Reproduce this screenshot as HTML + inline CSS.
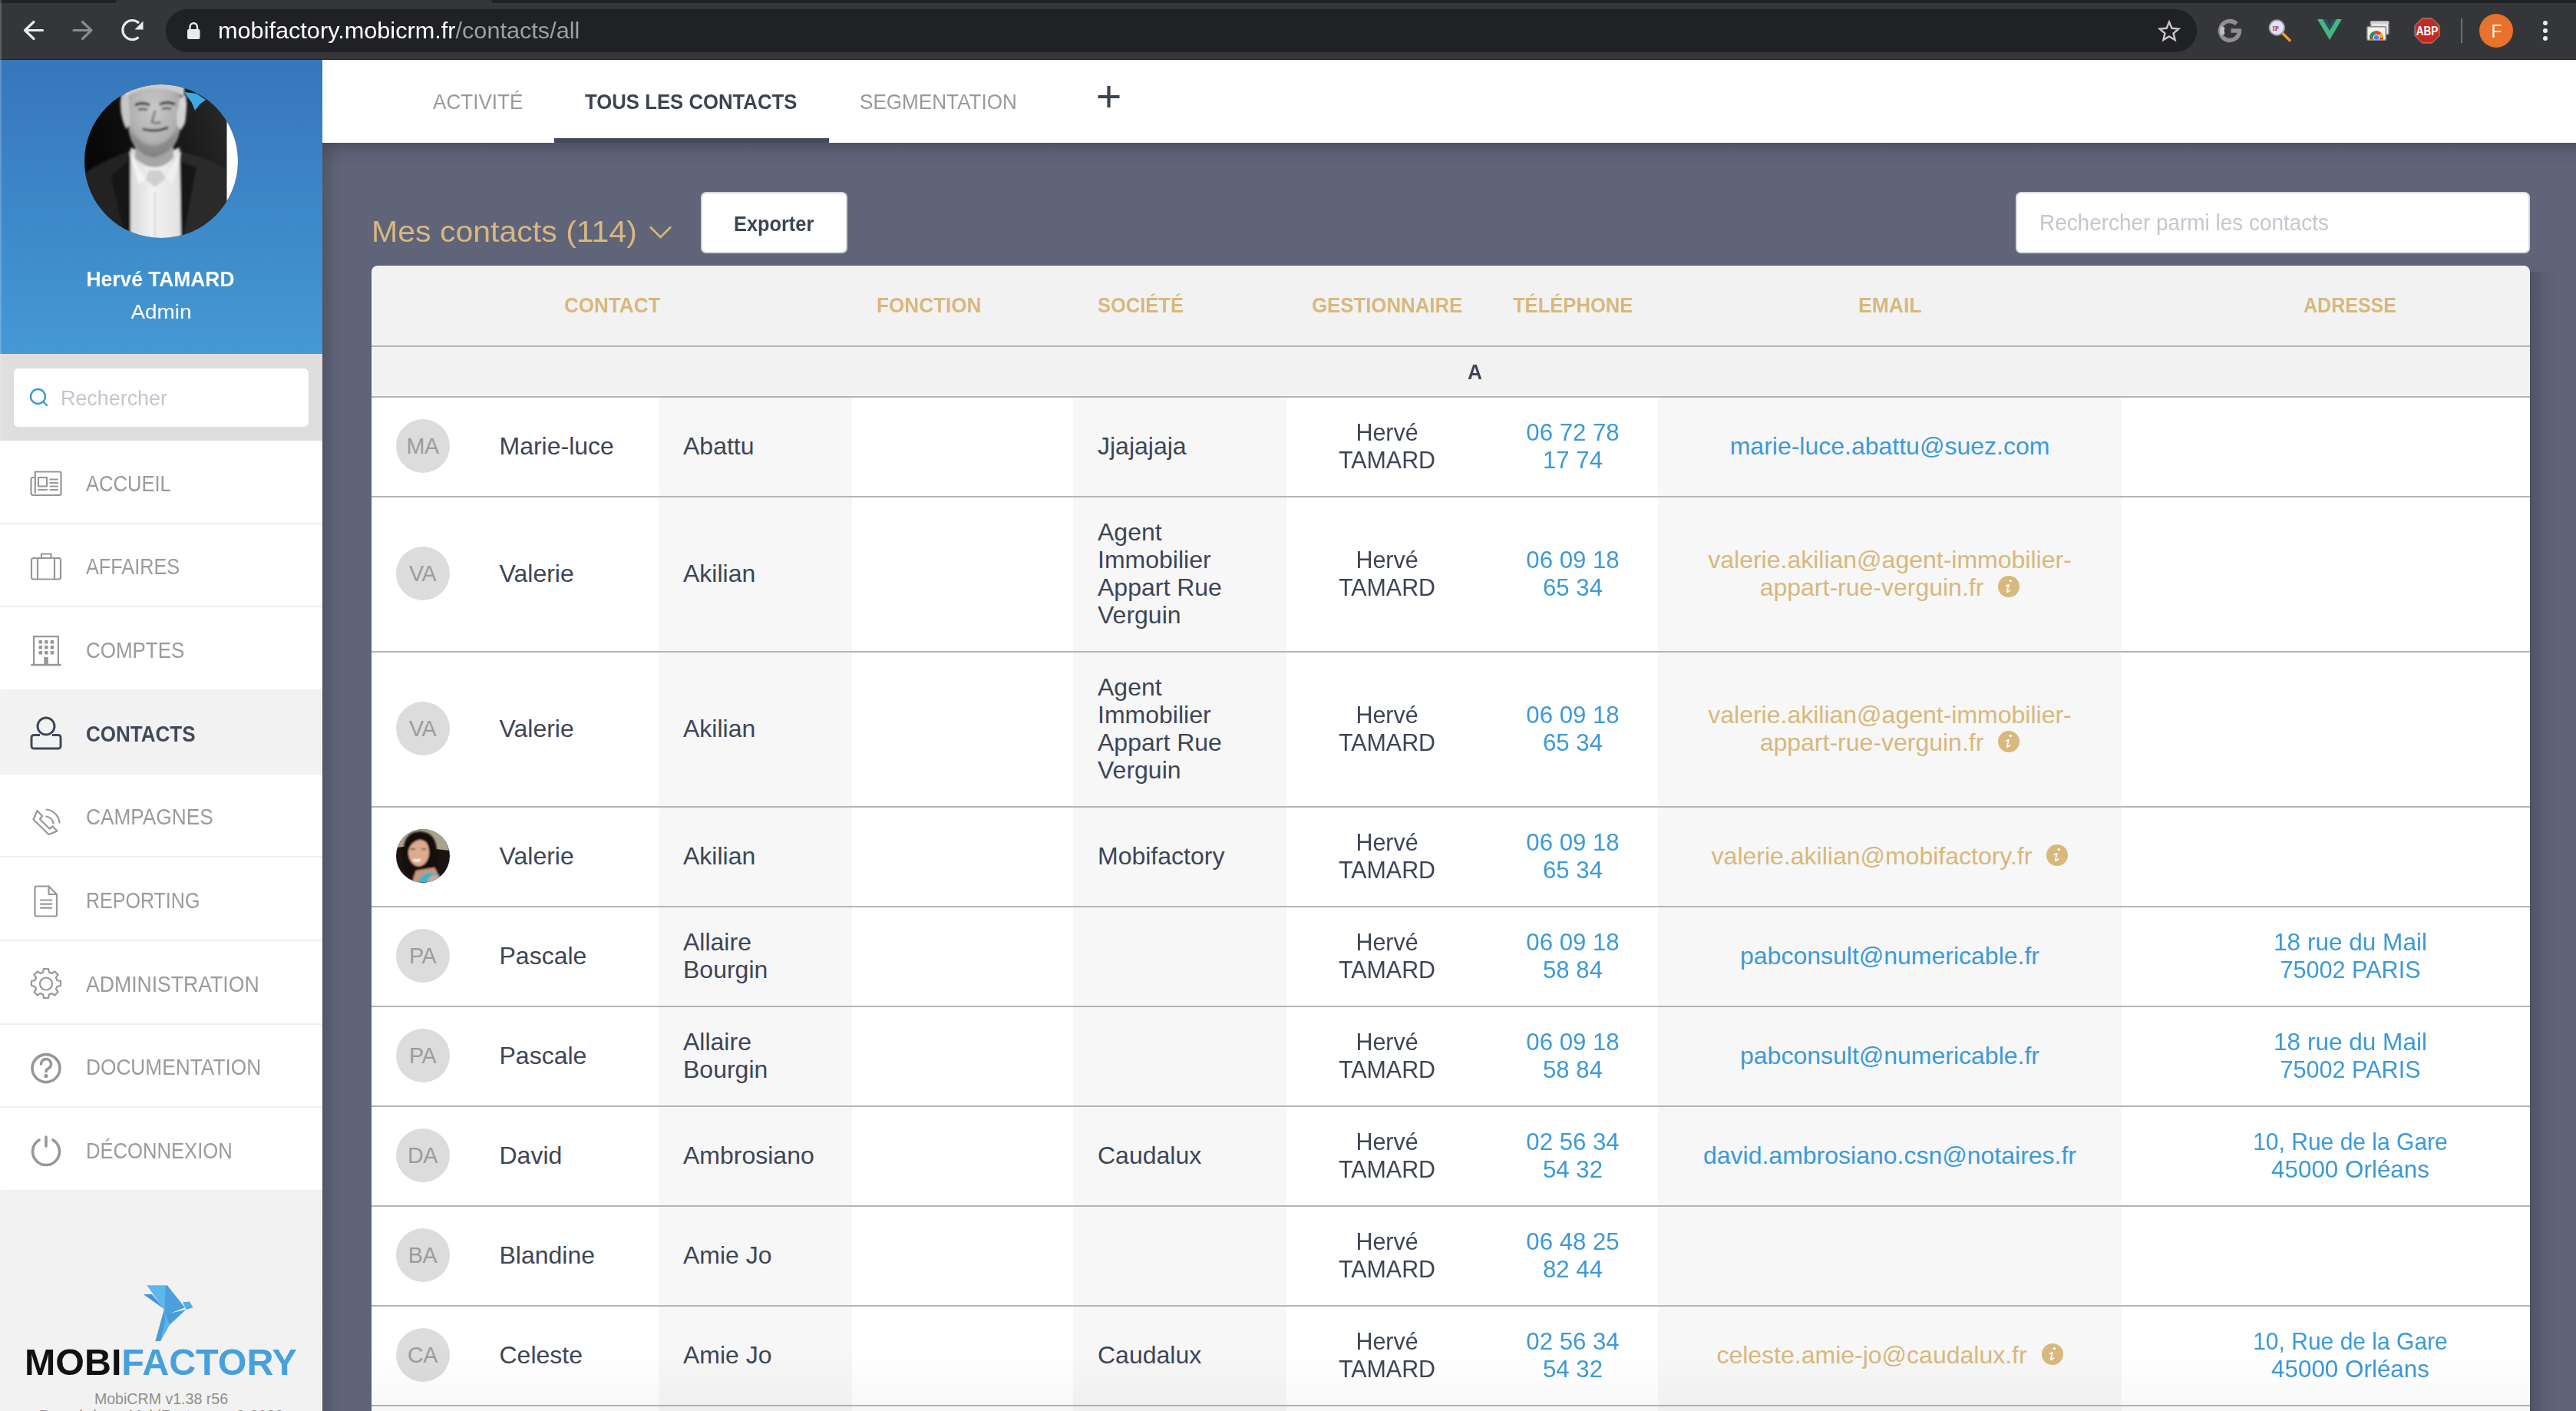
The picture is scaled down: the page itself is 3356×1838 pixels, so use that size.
<!DOCTYPE html><html><head><meta charset="utf-8"><style>
*{margin:0;padding:0;box-sizing:border-box}
html,body{width:3356px;height:1838px;overflow:hidden}
body{position:relative;background:#5f6478;font-family:"Liberation Sans",sans-serif}
.a{position:absolute}
.t{position:absolute;white-space:nowrap}
svg{position:absolute;overflow:visible}
</style></head><body>

<div class="a" style="left:0;top:0;width:3356px;height:78px;background:#35363a"></div>
<div class="a" style="left:0;top:0;width:152px;height:4px;background:#202124;border-bottom-right-radius:4px"></div>
<div class="a" style="left:640px;top:0;width:2716px;height:4px;background:#202124;border-bottom-left-radius:4px"></div>
<div class="a" style="left:0;top:77px;width:3356px;height:1px;background:#222326"></div>
<svg style="left:0;top:0" width="300" height="78"><g fill="none" stroke-linecap="round" stroke-linejoin="round" stroke-width="3.2"><path d="M55.5 39.5H33M44 28.5L32.5 39.5L44 50.5" stroke="#e8eaed"/><path d="M96 39.5H118.5M107.5 28.5L119 39.5L107.5 50.5" stroke="#8a8b8e"/></g><path d="M180.5 48.5 A12.5 12.5 0 1 1 181 30" fill="none" stroke="#e8eaed" stroke-width="3.2"/><path d="M175.5 38.5H186.5V27.5Z" fill="#e8eaed"/></svg>
<div class="a" style="left:216px;top:12px;width:2646px;height:56px;background:#202124;border-radius:28px"></div>
<svg style="left:0;top:0" width="300" height="78"><rect x="244" y="38" width="16.5" height="13" rx="2" fill="#e8eaed"/><path d="M247.5 38.5V35a4.75 4.75 0 0 1 9.5 0v3.5" fill="none" stroke="#e8eaed" stroke-width="2.4"/></svg>
<div class="t" style="top:25.28px;font-size:30.0px;line-height:30.0px;color:#fff;font-weight:400;left:284px;transform:scaleX(1.0220);transform-origin:left top;"><span style="color:#fff">mobifactory.mobicrm.fr</span><span style="color:#9aa0a6">/contacts/all</span></div>
<svg style="left:2800px;top:20px" width="50" height="40"><path transform="translate(26 20.5) scale(0.88) translate(-26 -20.5)" d="M26 7l3.9 9.3 10.1 0.9-7.7 6.6 2.3 9.8L26 28.4l-8.6 5.2 2.3-9.8-7.7-6.6 10.1-0.9z" fill="none" stroke="#c6c6c6" stroke-width="2.8" stroke-linejoin="miter"/></svg>
<svg style="left:2880px;top:15px" width="476" height="50"><path d="M37.5 25a12.5 12.5 0 1 1-3.8-9" fill="none" stroke="#8f8f8f" stroke-width="5.4"/><path d="M26.5 25h13.6" stroke="#8f8f8f" stroke-width="5.4"/><path d="M16 20a12.5 12.5 0 0 0 0 10" fill="none" stroke="#c2c2c2" stroke-width="5.4"/><circle cx="86.3" cy="21" r="9.8" fill="#d6e8fb" stroke="#9a9a9a" stroke-width="1.8"/><text x="80.5" y="24.5" font-size="8.5" font-weight="700" fill="#c22" font-family="Liberation Serif">IP</text><path d="M94.5 29l8.5 8.5" stroke="#f09a30" stroke-width="3.6" stroke-linecap="round"/><path d="M139 10h8l8 14 8-14h8l-16 27z" fill="#41b883"/><path d="M146 10h5l4 7 4-7h5l-9 15z" fill="#35495e"/><defs><clipPath id="cwin"><rect x="204" y="22" width="23.5" height="14.5"/></clipPath></defs><rect x="208.5" y="12.8" width="23.5" height="17" rx="1.5" fill="#e6e6e6" stroke="#8a8a8a" stroke-width="1.6"/><rect x="208.5" y="12.8" width="23.5" height="3" fill="#cfcfcf"/><rect x="203.8" y="19.8" width="24.5" height="17.5" rx="1.5" fill="#f0f0f0" stroke="#8a8a8a" stroke-width="1.6"/><g clip-path="url(#cwin)"><circle cx="216" cy="34" r="9" fill="#db4437"/><path d="M216 34L207 34A9 9 0 0 1 211.5 26.2Z" fill="#0f9d58"/><path d="M216 34L225 34A9 9 0 0 0 222 27.5Z" fill="#f4b400"/><circle cx="216" cy="34" r="4.2" fill="#fff"/><circle cx="216" cy="34" r="3.2" fill="#4285f4"/></g><path d="M275.5 9h13l9.5 9.5v13l-9.5 9.5h-13l-9.5-9.5v-13z" fill="#c42a20" stroke="#e0e0e0" stroke-width="0.6"/><text x="282" y="31.5" text-anchor="middle" font-size="16" font-weight="700" fill="#fff" font-family="Liberation Sans" transform="translate(282 0) scale(0.85 1) translate(-282 0)">ABP</text><rect x="326" y="9" width="2" height="32" fill="#6f7074"/><circle cx="372" cy="25" r="22" fill="#e8712b"/><text x="372.5" y="33.5" text-anchor="middle" font-size="23" fill="#fff" font-family="Liberation Sans">F</text><circle cx="436" cy="15" r="3" fill="#e8eaed"/><circle cx="436" cy="25" r="3" fill="#e8eaed"/><circle cx="436" cy="35" r="3" fill="#e8eaed"/></svg>
<div class="a" style="left:0;top:78px;width:420px;height:1760px;background:#f2f2f2"></div>
<div class="a" style="left:0;top:78px;width:420px;height:383px;background:linear-gradient(#3676bb,#4499d4)"></div>
<svg style="left:110px;top:110px" width="200" height="200" viewBox="0 0 200 200">
<defs><clipPath id="cav"><circle cx="100" cy="100" r="100"/></clipPath>
<filter id="bl" x="-20%" y="-20%" width="140%" height="140%"><feGaussianBlur stdDeviation="1.6"/></filter>
<filter id="bl4" x="-50%" y="-50%" width="200%" height="200%"><feGaussianBlur stdDeviation="4"/></filter>
<linearGradient id="bgm" x1="0" y1="0.3" x2="1" y2="0"><stop offset="0" stop-color="#070707"/><stop offset="0.5" stop-color="#161616"/><stop offset="1" stop-color="#2e2e2e"/></linearGradient>
<radialGradient id="face" cx="0.5" cy="0.38" r="0.62"><stop offset="0" stop-color="#c9c9c9"/><stop offset="0.65" stop-color="#b2b2b2"/><stop offset="1" stop-color="#8a8a8a"/></radialGradient>
<linearGradient id="shirt" x1="0" y1="0" x2="1" y2="0"><stop offset="0" stop-color="#d8d8d8"/><stop offset="0.45" stop-color="#f2f2f2"/><stop offset="1" stop-color="#e0e0e0"/></linearGradient>
</defs>
<g clip-path="url(#cav)">
<rect width="200" height="200" fill="url(#bgm)"/>
<g filter="url(#bl)">
<path d="M-5 120 Q20 100 62 86 L64 205 L-5 205Z" fill="#242424"/>
<path d="M118 86 Q160 94 192 116 L192 205 L118 205Z" fill="#2a2a2a"/>
<path d="M34 118 L62 96 L64 205 L54 205Z" fill="#161616"/>
<path d="M146 108 L120 98 L118 205 L128 205Z" fill="#191919"/>
<path d="M60 82 Q92 98 124 82 L126 205 L60 205Z" fill="url(#shirt)"/>
<path d="M66 74 Q92 100 116 74 L116 96 Q92 120 66 96Z" fill="#a6a6a6"/>
<path d="M58 86 L80 124 L70 130Z" fill="#f4f4f4"/>
<path d="M126 86 L106 122 L116 128Z" fill="#f0f0f0"/>
<path d="M80 124 L92 134 L106 122 L100 112 L84 112Z" fill="#cfcfcf"/>
<path d="M92 140 L92 205" stroke="#c8c8c8" stroke-width="1.5"/>
<path d="M54 18 Q54 -4 90 -6 Q126 -4 126 20 L124 62 Q118 90 90 95 Q64 92 58 62Z" fill="url(#face)"/>
<path d="M50 -8 L130 -8 L130 18 Q122 6 90 5 Q58 6 52 24Z" fill="#cdcdcd"/>
<path d="M48 12 Q44 36 54 58 L60 52 L58 18Z" fill="#c6c6c6"/>
<path d="M132 14 Q136 38 126 60 L120 52 L124 18Z" fill="#d6d6d6"/>
<ellipse cx="126" cy="42" rx="6" ry="14" fill="#d2d2d2"/>
<path d="M66 27 Q75 22 85 27" stroke="#333" stroke-width="3.6" fill="none"/>
<path d="M98 26 Q108 21 118 26" stroke="#333" stroke-width="3.6" fill="none"/>
<path d="M70 33 Q76 31 82 33" stroke="#444" stroke-width="2.4" fill="none"/>
<path d="M101 32 Q107 30 113 32" stroke="#444" stroke-width="2.4" fill="none"/>
<path d="M92 34 L88 49 Q93 52 99 49" stroke="#6a6a6a" stroke-width="2.6" fill="none"/>
<path d="M76 58 Q92 63 109 56" stroke="#383838" stroke-width="3.4" fill="none"/>
<path d="M60 60 Q90 100 122 58 Q116 88 90 95 Q66 90 60 60Z" fill="#737373" opacity="0.45"/>
</g>
<rect x="185.5" y="35" width="20" height="130" fill="#fff"/>
<path d="M130 10 L146 12 L158 20 L150 26 L144 34 L140 24Z" fill="#3fa9e6"/>
</g></svg>
<div class="t" style="top:350.46px;font-size:27.09px;line-height:27.09px;color:#fff;font-weight:700;left:9.499381706191912px;width:400px;text-align:center;transform:scaleX(0.9736);transform-origin:center top;">Hervé TAMARD</div>
<div class="t" style="top:392.92px;font-size:26.68px;line-height:26.68px;color:#fff;font-weight:400;left:10.09302469135801px;width:400px;text-align:center;transform:scaleX(1.0459);transform-origin:center top;">Admin</div>
<div class="a" style="left:0;top:461px;width:420px;height:113px;background:#dedede"></div>
<div class="a" style="left:18px;top:480px;width:384px;height:76px;background:#fff;border-radius:6px"></div>
<svg style="left:0;top:0" width="100" height="600"><circle cx="49.5" cy="516.5" r="9.5" fill="none" stroke="#3b9ad9" stroke-width="2.4"/><path d="M56.5 523.5L61 528" stroke="#3b9ad9" stroke-width="2.4" stroke-linecap="round"/></svg>
<div class="t" style="top:504.32px;font-size:28.21px;line-height:28.21px;color:#c3c6ce;font-weight:400;left:79.0px;transform:scaleX(0.9532);transform-origin:left top;">Rechercher</div>
<div class="a" style="left:0;top:574.00px;width:420px;height:108.67px;background:#fff"></div>
<div class="a" style="left:0;top:680.67px;width:420px;height:2px;background:#efefef"></div>
<div class="t" style="top:615.66px;font-size:28.63px;line-height:28.63px;color:#9b9b9b;font-weight:400;left:112.1px;transform:scaleX(0.8927);transform-origin:left top;">ACCUEIL</div>
<div class="a" style="left:0;top:682.67px;width:420px;height:108.67px;background:#fff"></div>
<div class="a" style="left:0;top:789.34px;width:420px;height:2px;background:#efefef"></div>
<div class="t" style="top:724.33px;font-size:28.63px;line-height:28.63px;color:#9b9b9b;font-weight:400;left:112.1px;transform:scaleX(0.8820);transform-origin:left top;">AFFAIRES</div>
<div class="a" style="left:0;top:791.34px;width:420px;height:108.67px;background:#fff"></div>
<div class="t" style="top:833.00px;font-size:28.63px;line-height:28.63px;color:#9b9b9b;font-weight:400;left:112.1px;transform:scaleX(0.9062);transform-origin:left top;">COMPTES</div>
<div class="a" style="left:0;top:897.7px;width:420px;height:111.6px;background:#f2f2f2"></div>
<div class="t" style="top:941.67px;font-size:28.63px;line-height:28.63px;color:#414959;font-weight:700;left:112.1px;transform:scaleX(0.9087);transform-origin:left top;">CONTACTS</div>
<div class="a" style="left:0;top:1008.68px;width:420px;height:108.67px;background:#fff"></div>
<div class="a" style="left:0;top:1115.35px;width:420px;height:2px;background:#efefef"></div>
<div class="t" style="top:1050.34px;font-size:28.63px;line-height:28.63px;color:#9b9b9b;font-weight:400;left:112.1px;transform:scaleX(0.9163);transform-origin:left top;">CAMPAGNES</div>
<div class="a" style="left:0;top:1117.35px;width:420px;height:108.67px;background:#fff"></div>
<div class="a" style="left:0;top:1224.02px;width:420px;height:2px;background:#efefef"></div>
<div class="t" style="top:1159.01px;font-size:28.63px;line-height:28.63px;color:#9b9b9b;font-weight:400;left:112.1px;transform:scaleX(0.8745);transform-origin:left top;">REPORTING</div>
<div class="a" style="left:0;top:1226.02px;width:420px;height:108.67px;background:#fff"></div>
<div class="a" style="left:0;top:1332.69px;width:420px;height:2px;background:#efefef"></div>
<div class="t" style="top:1267.68px;font-size:28.63px;line-height:28.63px;color:#9b9b9b;font-weight:400;left:112.1px;transform:scaleX(0.9295);transform-origin:left top;">ADMINISTRATION</div>
<div class="a" style="left:0;top:1334.69px;width:420px;height:108.67px;background:#fff"></div>
<div class="a" style="left:0;top:1441.36px;width:420px;height:2px;background:#efefef"></div>
<div class="t" style="top:1376.35px;font-size:28.63px;line-height:28.63px;color:#9b9b9b;font-weight:400;left:112.1px;transform:scaleX(0.9177);transform-origin:left top;">DOCUMENTATION</div>
<div class="a" style="left:0;top:1443.36px;width:420px;height:108.67px;background:#fff"></div>
<div class="a" style="left:0;top:1550.03px;width:420px;height:2px;background:#efefef"></div>
<div class="t" style="top:1485.02px;font-size:28.63px;line-height:28.63px;color:#9b9b9b;font-weight:400;left:112.1px;transform:scaleX(0.8946);transform-origin:left top;">DÉCONNEXION</div>
<svg style="left:0;top:0" width="100" height="1600"><g fill="none" stroke="#979797" stroke-width="2.2" stroke-linejoin="round" stroke-linecap="round">
<path d="M46 614.5H77.5a2 2 0 0 1 2 2V643a2 2 0 0 1-2 2H43.5a3 3 0 0 1-3-3V624a2 2 0 0 1 2-2H46"/><path d="M45.8 614.5V642"/>
<rect x="50" y="622" width="11" height="11.5"/><path d="M65.5 624.5h9.5M65.5 629h9.5M65.5 633.5h9.5M65.5 638h9.5M50 638h11"/>
<rect x="41" y="727" width="38" height="27.5" rx="2.5"/><path d="M54 727v-5.5h12.5v5.5M49 727v27.5M71 727v27.5"/>
</g>
<g fill="#979797"><rect x="43" y="828" width="34" height="2.2"/><rect x="43" y="828" width="2.2" height="38"/><rect x="74.8" y="828" width="2.2" height="38"/><rect x="40.3" y="864.8" width="39.3" height="2.6"/>
<rect x="50.5" y="834" width="4.6" height="4.6" rx="1"/><rect x="58" y="834" width="4.6" height="4.6" rx="1"/><rect x="65.6" y="834" width="4.6" height="4.6" rx="1"/>
<rect x="50.5" y="841" width="4.6" height="4.6" rx="1"/><rect x="58" y="841" width="4.6" height="4.6" rx="1"/><rect x="65.6" y="841" width="4.6" height="4.6" rx="1"/>
<rect x="50.5" y="848" width="4.6" height="4.6" rx="1"/><rect x="58" y="848" width="4.6" height="4.6" rx="1"/><rect x="65.6" y="848" width="4.6" height="4.6" rx="1"/>
<rect x="57.3" y="856" width="5.5" height="10" rx="1"/></g>
<g fill="none" stroke="#414959" stroke-width="3"><circle cx="60" cy="946" r="11"/><path d="M52 957.5H44a3 3 0 0 0-3 3V972a3 3 0 0 0 3 3H76a3 3 0 0 0 3-3V960.5a3 3 0 0 0-3-3H68"/></g>
<g fill="none" stroke="#979797" stroke-width="2.2" stroke-linejoin="round" stroke-linecap="round">
<path d="M48.5 1056L55 1063L52 1067L64.5 1079.5L68.5 1076.5L74.5 1082.5L63.5 1087L43.5 1067.5Z"/>
<path d="M60.5 1063.5a11 11 0 0 1 9 9"/><path d="M60.5 1054.5a19 19 0 0 1 17 17"/>
<path d="M47.5 1154.5H63.5L74 1165V1191.5a2 2 0 0 1-2 2H47.5a2 2 0 0 1-2-2V1156.5a2 2 0 0 1 2-2Z"/><path d="M63.5 1154.5V1165H74"/>
<path d="M53 1172.5h14.3M53 1177.6h14.3M53 1182.6h14.3"/>
<circle cx="60" cy="1281.5" r="8"/>
</g>
<path d="M57 1262h6l1 4.5 3.3 1.6 4-2.6 4.2 4.2-2.6 4 1.6 3.3 4.5 1v6l-4.5 1-1.6 3.3 2.6 4-4.2 4.2-4-2.6-3.3 1.6-1 4.5h-6l-1-4.5-3.3-1.6-4 2.6-4.2-4.2 2.6-4-1.6-3.3-4.5-1v-6l4.5-1 1.6-3.3-2.6-4 4.2-4.2 4 2.6 3.3-1.6z" fill="none" stroke="#979797" stroke-width="2.2" stroke-linejoin="round"/>
<g fill="none" stroke="#979797" stroke-width="3.6" stroke-linecap="round">
<circle cx="60" cy="1391.6" r="18"/>
<path d="M53.5 1386a6.5 6.5 0 1 1 9.5 5.8c-2 1-3 2-3 4"/>
<path d="M51 1485a17.5 17.5 0 1 0 18 0"/><path d="M60 1481v12"/>
</g>
<circle cx="60" cy="1401.5" r="2.6" fill="#979797"/>
</svg>
<svg style="left:175px;top:1665px" width="90" height="90" viewBox="0 0 90 90">
<path d="M11.8 21L23 21L38.6 40Z" fill="#4793d6"/>
<path d="M16.3 9.2L42.7 9.2L65.7 38.3L45.9 46L38.7 41Z" fill="#5cb8ec"/>
<path d="M40.5 11L42.7 9.2L65.7 38.3L45.9 46L39.5 41Z" fill="#4b9fdc"/>
<path d="M38.9 40.8L45.9 46L67 41L46 60.6L34.4 81.6L27.4 82.3Z" fill="#58b3ea"/>
<path d="M38.9 40.8L45.9 46L67 41L46 60.6Z" fill="#4a9bd9"/>
<path d="M27.4 82.3L38.9 40.8L40 55L34.4 81.6Z" fill="#4a9ad8"/>
<path d="M63.1 31.2L72 30.6L76.5 38.3L67.6 41Z" fill="#52aee6"/>
</svg>
<div class="t" style="left:32px;top:1748px;font-size:48.4px;line-height:52px;font-weight:700;letter-spacing:0px"><span style="color:#111">MOBI</span><span style="color:#45a0dc">FACTORY</span></div>
<div class="t" style="top:1813.44px;font-size:19.6px;line-height:19.6px;color:#8f8f8f;font-weight:400;left:10.0px;width:400px;text-align:center;">MobiCRM v1.38 r56</div>
<div class="t" style="top:1835.44px;font-size:19.6px;line-height:19.6px;color:#8f8f8f;font-weight:400;left:10.0px;width:400px;text-align:center;">Propulsé par MobiFactory — © 2020</div>
<div class="a" style="left:420px;top:186px;width:26px;height:1652px;background:linear-gradient(90deg,rgba(0,0,0,0.14),rgba(0,0,0,0.05) 50%,rgba(0,0,0,0))"></div>
<div class="a" style="left:420px;top:78px;width:2936px;height:108px;background:#fff"></div>
<div class="a" style="left:420px;top:186px;width:2936px;height:30px;background:linear-gradient(rgba(0,0,0,0.16),rgba(0,0,0,0.05) 50%,rgba(0,0,0,0))"></div>
<div class="t" style="top:117.98px;font-size:28.49px;line-height:28.49px;color:#999999;font-weight:400;left:564.0px;transform:scaleX(0.9155);transform-origin:left top;">ACTIVITÉ</div>
<div class="t" style="top:117.98px;font-size:28.49px;line-height:28.49px;color:#3c4354;font-weight:700;left:762.2px;transform:scaleX(0.9035);transform-origin:left top;">TOUS LES CONTACTS</div>
<div class="t" style="top:118.00px;font-size:28.35px;line-height:28.35px;color:#999999;font-weight:400;left:1120.2px;transform:scaleX(0.9209);transform-origin:left top;">SEGMENTATION</div>
<svg style="left:1420px;top:100px" width="50" height="50"><path d="M24.5 12v28M10.5 26h28" stroke="#3c4354" stroke-width="4.2"/></svg>
<div class="a" style="left:722px;top:180px;width:358px;height:6px;background:#434a5b"></div>
<div class="t" style="top:282.24px;font-size:39.53px;line-height:39.53px;color:#d9b77e;font-weight:400;left:484.2px;transform:scaleX(1.0385);transform-origin:left top;">Mes contacts (114)</div>
<svg style="left:840px;top:285px" width="40" height="30"><path d="M7 10.5L20.5 24L34 10.5" fill="none" stroke="#d9b77e" stroke-width="2.6"/></svg>
<div class="a" style="left:913px;top:250px;width:191px;height:80px;background:#fff;border:2px solid #d3d6de;border-radius:7px"></div>
<div class="t" style="top:276.72px;font-size:28.21px;line-height:28.21px;color:#3c4354;font-weight:700;left:956.2px;transform:scaleX(0.8991);transform-origin:left top;">Exporter</div>
<div class="a" style="left:2626px;top:250px;width:670px;height:80px;background:#fff;border:2px solid #d9dbe3;border-radius:7px"></div>
<div class="t" style="top:275.08px;font-size:30.03px;line-height:30.03px;color:#c4c7d1;font-weight:400;left:2657.0px;transform:scaleX(0.9297);transform-origin:left top;">Rechercher parmi les contacts</div>
<div class="a" style="left:3296px;top:354px;width:36px;height:1500px;background:linear-gradient(90deg,rgba(20,24,40,0.22),rgba(20,24,40,0.08) 45%,rgba(20,24,40,0))"></div>
<div class="a" style="left:484px;top:346px;width:2812px;height:1500px;background:#f2f2f2;border-radius:8px 8px 0 0;box-shadow:0 0 2px rgba(0,0,0,0.25)"></div>
<div class="t" style="top:384.27px;font-size:27.79px;line-height:27.79px;color:#d8b87c;font-weight:700;left:734.6px;transform:scaleX(0.9372);transform-origin:left top;">CONTACT</div>
<div class="t" style="top:384.27px;font-size:27.79px;line-height:27.79px;color:#d8b87c;font-weight:700;left:1142.0px;transform:scaleX(0.9405);transform-origin:left top;">FONCTION</div>
<div class="t" style="top:384.27px;font-size:27.79px;line-height:27.79px;color:#d8b87c;font-weight:700;left:1430.0px;transform:scaleX(0.9179);transform-origin:left top;">SOCIÉTÉ</div>
<div class="t" style="top:384.27px;font-size:27.79px;line-height:27.79px;color:#d8b87c;font-weight:700;left:1708.7px;transform:scaleX(0.9279);transform-origin:left top;">GESTIONNAIRE</div>
<div class="t" style="top:384.27px;font-size:27.79px;line-height:27.79px;color:#d8b87c;font-weight:700;left:1970.6px;transform:scaleX(0.9207);transform-origin:left top;">TÉLÉPHONE</div>
<div class="t" style="top:384.27px;font-size:27.79px;line-height:27.79px;color:#d8b87c;font-weight:700;left:2420.5px;transform:scaleX(0.9541);transform-origin:left top;">EMAIL</div>
<div class="t" style="top:384.27px;font-size:27.79px;line-height:27.79px;color:#d8b87c;font-weight:700;left:3001.0px;transform:scaleX(0.9004);transform-origin:left top;">ADRESSE</div>
<div class="a" style="left:484px;top:450px;width:2812px;height:2px;background:#b5b5b5"></div>
<div class="t" style="top:471.50px;font-size:26.82px;line-height:26.82px;color:#3e4556;font-weight:700;left:1912.0px;transform:scaleX(0.9814);transform-origin:left top;">A</div>
<div class="a" style="left:484px;top:516px;width:2812px;height:2px;background:#b5b5b5"></div>
<div class="a" style="left:484px;top:518px;width:374px;height:128px;background:#fff"></div>
<div class="a" style="left:858px;top:518px;width:252px;height:128px;background:#f7f7f7"></div>
<div class="a" style="left:1110px;top:518px;width:288px;height:128px;background:#fff"></div>
<div class="a" style="left:1398px;top:518px;width:278px;height:128px;background:#f7f7f7"></div>
<div class="a" style="left:1676px;top:518px;width:484px;height:128px;background:#fff"></div>
<div class="a" style="left:2160px;top:518px;width:604px;height:128px;background:#f7f7f7"></div>
<div class="a" style="left:2764px;top:518px;width:532px;height:128px;background:#fff"></div>
<div class="a" style="left:484px;top:646px;width:2812px;height:2px;background:#b5b5b5"></div>
<div class="a" style="left:515.5px;top:546.0px;width:70px;height:70px;border-radius:50%;background:#dcdcdc"></div>
<div class="t" style="top:566.68px;font-size:28.7px;line-height:28.7px;color:#9b9b9b;font-weight:400;left:500.5px;width:100px;text-align:center;letter-spacing:-0.5px;">MA</div>
<div class="t" style="top:564.50px;font-size:32px;line-height:32px;color:#3e4556;font-weight:400;left:650.5px;">Marie-luce</div>
<div class="t" style="top:564.50px;font-size:32px;line-height:32px;color:#3e4556;font-weight:400;left:890px;">Abattu</div>
<div class="t" style="top:564.50px;font-size:32px;line-height:32px;color:#3e4556;font-weight:400;left:1430px;">Jjajajaja</div>
<div class="t" style="top:546.50px;font-size:32px;line-height:32px;color:#3e4556;font-weight:400;left:1606.6px;width:400px;text-align:center;transform:scaleX(0.9500);transform-origin:center top;">Hervé</div>
<div class="t" style="top:582.50px;font-size:32px;line-height:32px;color:#3e4556;font-weight:400;left:1606.6px;width:400px;text-align:center;transform:scaleX(0.9500);transform-origin:center top;">TAMARD</div>
<div class="t" style="top:546.50px;font-size:32px;line-height:32px;color:#3b9ad9;font-weight:400;left:1848.6999999999998px;width:400px;text-align:center;transform:scaleX(0.9750);transform-origin:center top;">06 72 78</div>
<div class="t" style="top:582.50px;font-size:32px;line-height:32px;color:#3b9ad9;font-weight:400;left:1848.6999999999998px;width:400px;text-align:center;transform:scaleX(0.9750);transform-origin:center top;">17 74</div>
<div class="t" style="top:564.50px;font-size:32px;line-height:32px;color:#3b9ad9;font-weight:400;left:2062.0px;width:800px;text-align:center;">marie-luce.abattu@suez.com</div>
<div class="a" style="left:484px;top:648px;width:374px;height:200px;background:#fff"></div>
<div class="a" style="left:858px;top:648px;width:252px;height:200px;background:#f7f7f7"></div>
<div class="a" style="left:1110px;top:648px;width:288px;height:200px;background:#fff"></div>
<div class="a" style="left:1398px;top:648px;width:278px;height:200px;background:#f7f7f7"></div>
<div class="a" style="left:1676px;top:648px;width:484px;height:200px;background:#fff"></div>
<div class="a" style="left:2160px;top:648px;width:604px;height:200px;background:#f7f7f7"></div>
<div class="a" style="left:2764px;top:648px;width:532px;height:200px;background:#fff"></div>
<div class="a" style="left:484px;top:848px;width:2812px;height:2px;background:#b5b5b5"></div>
<div class="a" style="left:515.5px;top:712.0px;width:70px;height:70px;border-radius:50%;background:#dcdcdc"></div>
<div class="t" style="top:732.68px;font-size:28.7px;line-height:28.7px;color:#9b9b9b;font-weight:400;left:500.5px;width:100px;text-align:center;letter-spacing:-0.5px;">VA</div>
<div class="t" style="top:730.50px;font-size:32px;line-height:32px;color:#3e4556;font-weight:400;left:650.5px;">Valerie</div>
<div class="t" style="top:730.50px;font-size:32px;line-height:32px;color:#3e4556;font-weight:400;left:890px;">Akilian</div>
<div class="t" style="top:676.50px;font-size:32px;line-height:32px;color:#3e4556;font-weight:400;left:1430px;">Agent</div>
<div class="t" style="top:712.50px;font-size:32px;line-height:32px;color:#3e4556;font-weight:400;left:1430px;">Immobilier</div>
<div class="t" style="top:748.50px;font-size:32px;line-height:32px;color:#3e4556;font-weight:400;left:1430px;">Appart Rue</div>
<div class="t" style="top:784.50px;font-size:32px;line-height:32px;color:#3e4556;font-weight:400;left:1430px;">Verguin</div>
<div class="t" style="top:712.50px;font-size:32px;line-height:32px;color:#3e4556;font-weight:400;left:1606.6px;width:400px;text-align:center;transform:scaleX(0.9500);transform-origin:center top;">Hervé</div>
<div class="t" style="top:748.50px;font-size:32px;line-height:32px;color:#3e4556;font-weight:400;left:1606.6px;width:400px;text-align:center;transform:scaleX(0.9500);transform-origin:center top;">TAMARD</div>
<div class="t" style="top:712.50px;font-size:32px;line-height:32px;color:#3b9ad9;font-weight:400;left:1848.6999999999998px;width:400px;text-align:center;transform:scaleX(0.9750);transform-origin:center top;">06 09 18</div>
<div class="t" style="top:748.50px;font-size:32px;line-height:32px;color:#3b9ad9;font-weight:400;left:1848.6999999999998px;width:400px;text-align:center;transform:scaleX(0.9750);transform-origin:center top;">65 34</div>
<div class="t" style="top:712.50px;font-size:32px;line-height:32px;color:#d8b87c;font-weight:400;left:2062.0px;width:800px;text-align:center;">valerie.akilian@agent-immobilier-</div>
<div class="t" style="top:748.50px;font-size:32px;line-height:32px;color:#d8b87c;font-weight:400;left:2062.0px;width:800px;text-align:center;">appart-rue-verguin.fr<svg style="position:relative;display:inline-block;vertical-align:-2px;margin-left:19px" width="28" height="28" viewBox="0 0 28 28"><circle cx="14" cy="14" r="14" fill="#d8b87c"/><circle cx="16.3" cy="6.6" r="1.7" fill="#fff"/><path d="M10.6 13.3Q12.6 11.9 14 11.9L11.6 20.4Q11.3 21.6 12.4 21.1L15.6 19" fill="none" stroke="#fff" stroke-width="1.7" stroke-linecap="round" stroke-linejoin="round"/></svg></div>
<div class="a" style="left:484px;top:850px;width:374px;height:200px;background:#fff"></div>
<div class="a" style="left:858px;top:850px;width:252px;height:200px;background:#f7f7f7"></div>
<div class="a" style="left:1110px;top:850px;width:288px;height:200px;background:#fff"></div>
<div class="a" style="left:1398px;top:850px;width:278px;height:200px;background:#f7f7f7"></div>
<div class="a" style="left:1676px;top:850px;width:484px;height:200px;background:#fff"></div>
<div class="a" style="left:2160px;top:850px;width:604px;height:200px;background:#f7f7f7"></div>
<div class="a" style="left:2764px;top:850px;width:532px;height:200px;background:#fff"></div>
<div class="a" style="left:484px;top:1050px;width:2812px;height:2px;background:#b5b5b5"></div>
<div class="a" style="left:515.5px;top:914.0px;width:70px;height:70px;border-radius:50%;background:#dcdcdc"></div>
<div class="t" style="top:934.68px;font-size:28.7px;line-height:28.7px;color:#9b9b9b;font-weight:400;left:500.5px;width:100px;text-align:center;letter-spacing:-0.5px;">VA</div>
<div class="t" style="top:932.50px;font-size:32px;line-height:32px;color:#3e4556;font-weight:400;left:650.5px;">Valerie</div>
<div class="t" style="top:932.50px;font-size:32px;line-height:32px;color:#3e4556;font-weight:400;left:890px;">Akilian</div>
<div class="t" style="top:878.50px;font-size:32px;line-height:32px;color:#3e4556;font-weight:400;left:1430px;">Agent</div>
<div class="t" style="top:914.50px;font-size:32px;line-height:32px;color:#3e4556;font-weight:400;left:1430px;">Immobilier</div>
<div class="t" style="top:950.50px;font-size:32px;line-height:32px;color:#3e4556;font-weight:400;left:1430px;">Appart Rue</div>
<div class="t" style="top:986.50px;font-size:32px;line-height:32px;color:#3e4556;font-weight:400;left:1430px;">Verguin</div>
<div class="t" style="top:914.50px;font-size:32px;line-height:32px;color:#3e4556;font-weight:400;left:1606.6px;width:400px;text-align:center;transform:scaleX(0.9500);transform-origin:center top;">Hervé</div>
<div class="t" style="top:950.50px;font-size:32px;line-height:32px;color:#3e4556;font-weight:400;left:1606.6px;width:400px;text-align:center;transform:scaleX(0.9500);transform-origin:center top;">TAMARD</div>
<div class="t" style="top:914.50px;font-size:32px;line-height:32px;color:#3b9ad9;font-weight:400;left:1848.6999999999998px;width:400px;text-align:center;transform:scaleX(0.9750);transform-origin:center top;">06 09 18</div>
<div class="t" style="top:950.50px;font-size:32px;line-height:32px;color:#3b9ad9;font-weight:400;left:1848.6999999999998px;width:400px;text-align:center;transform:scaleX(0.9750);transform-origin:center top;">65 34</div>
<div class="t" style="top:914.50px;font-size:32px;line-height:32px;color:#d8b87c;font-weight:400;left:2062.0px;width:800px;text-align:center;">valerie.akilian@agent-immobilier-</div>
<div class="t" style="top:950.50px;font-size:32px;line-height:32px;color:#d8b87c;font-weight:400;left:2062.0px;width:800px;text-align:center;">appart-rue-verguin.fr<svg style="position:relative;display:inline-block;vertical-align:-2px;margin-left:19px" width="28" height="28" viewBox="0 0 28 28"><circle cx="14" cy="14" r="14" fill="#d8b87c"/><circle cx="16.3" cy="6.6" r="1.7" fill="#fff"/><path d="M10.6 13.3Q12.6 11.9 14 11.9L11.6 20.4Q11.3 21.6 12.4 21.1L15.6 19" fill="none" stroke="#fff" stroke-width="1.7" stroke-linecap="round" stroke-linejoin="round"/></svg></div>
<div class="a" style="left:484px;top:1052px;width:374px;height:128px;background:#fff"></div>
<div class="a" style="left:858px;top:1052px;width:252px;height:128px;background:#f7f7f7"></div>
<div class="a" style="left:1110px;top:1052px;width:288px;height:128px;background:#fff"></div>
<div class="a" style="left:1398px;top:1052px;width:278px;height:128px;background:#f7f7f7"></div>
<div class="a" style="left:1676px;top:1052px;width:484px;height:128px;background:#fff"></div>
<div class="a" style="left:2160px;top:1052px;width:604px;height:128px;background:#f7f7f7"></div>
<div class="a" style="left:2764px;top:1052px;width:532px;height:128px;background:#fff"></div>
<div class="a" style="left:484px;top:1180px;width:2812px;height:2px;background:#b5b5b5"></div>
<svg style="left:516px;top:1080.0px" width="70" height="70" viewBox="0 0 70 70"><defs><clipPath id="cp1"><circle cx="35" cy="35" r="35"/></clipPath>
<filter id="bl2" x="-20%" y="-20%" width="140%" height="140%"><feGaussianBlur stdDeviation="1"/></filter></defs>
<g clip-path="url(#cp1)"><rect width="70" height="70" fill="#1a1311"/>
<path d="M0 0H70V28L52 26L48 20L20 22L0 24Z" fill="#a9a28c"/>
<g filter="url(#bl2)">
<path d="M10 30 Q9 4 31 3 Q53 4 53 30 Q56 50 52 66 L36 62 Q24 64 18 62 Q8 52 10 30Z" fill="#120d0c"/>
<path d="M26 54 L50 50 L62 70 L20 70Z" fill="#c9957a"/>
<path d="M27 70 Q34 58 42 56 Q50 56 56 62 L58 70Z" fill="#4ab0cc"/>
<path d="M40 70 Q44 60 50 60 Q56 62 58 70Z" fill="#d7a58a"/>
<ellipse cx="29.5" cy="30" rx="13.5" ry="18.5" fill="#dcaa8d"/>
<path d="M16 22 Q20 8 34 10 Q46 12 46 30 Q42 14 30 14 Q20 16 16 28Z" fill="#120d0c"/>
<path d="M19 26h6M33 26h6" stroke="#6a4a3a" stroke-width="1.8"/>
<path d="M22.5 39.5 Q27 43 31.5 39.5" stroke="#fff" stroke-width="2.6" fill="none"/>
</g></g></svg>
<div class="t" style="top:1098.50px;font-size:32px;line-height:32px;color:#3e4556;font-weight:400;left:650.5px;">Valerie</div>
<div class="t" style="top:1098.50px;font-size:32px;line-height:32px;color:#3e4556;font-weight:400;left:890px;">Akilian</div>
<div class="t" style="top:1098.50px;font-size:32px;line-height:32px;color:#3e4556;font-weight:400;left:1430px;">Mobifactory</div>
<div class="t" style="top:1080.50px;font-size:32px;line-height:32px;color:#3e4556;font-weight:400;left:1606.6px;width:400px;text-align:center;transform:scaleX(0.9500);transform-origin:center top;">Hervé</div>
<div class="t" style="top:1116.50px;font-size:32px;line-height:32px;color:#3e4556;font-weight:400;left:1606.6px;width:400px;text-align:center;transform:scaleX(0.9500);transform-origin:center top;">TAMARD</div>
<div class="t" style="top:1080.50px;font-size:32px;line-height:32px;color:#3b9ad9;font-weight:400;left:1848.6999999999998px;width:400px;text-align:center;transform:scaleX(0.9750);transform-origin:center top;">06 09 18</div>
<div class="t" style="top:1116.50px;font-size:32px;line-height:32px;color:#3b9ad9;font-weight:400;left:1848.6999999999998px;width:400px;text-align:center;transform:scaleX(0.9750);transform-origin:center top;">65 34</div>
<div class="t" style="top:1098.50px;font-size:32px;line-height:32px;color:#d8b87c;font-weight:400;left:2062.0px;width:800px;text-align:center;">valerie.akilian@mobifactory.fr<svg style="position:relative;display:inline-block;vertical-align:-2px;margin-left:19px" width="28" height="28" viewBox="0 0 28 28"><circle cx="14" cy="14" r="14" fill="#d8b87c"/><circle cx="16.3" cy="6.6" r="1.7" fill="#fff"/><path d="M10.6 13.3Q12.6 11.9 14 11.9L11.6 20.4Q11.3 21.6 12.4 21.1L15.6 19" fill="none" stroke="#fff" stroke-width="1.7" stroke-linecap="round" stroke-linejoin="round"/></svg></div>
<div class="a" style="left:484px;top:1182px;width:374px;height:128px;background:#fff"></div>
<div class="a" style="left:858px;top:1182px;width:252px;height:128px;background:#f7f7f7"></div>
<div class="a" style="left:1110px;top:1182px;width:288px;height:128px;background:#fff"></div>
<div class="a" style="left:1398px;top:1182px;width:278px;height:128px;background:#f7f7f7"></div>
<div class="a" style="left:1676px;top:1182px;width:484px;height:128px;background:#fff"></div>
<div class="a" style="left:2160px;top:1182px;width:604px;height:128px;background:#f7f7f7"></div>
<div class="a" style="left:2764px;top:1182px;width:532px;height:128px;background:#fff"></div>
<div class="a" style="left:484px;top:1310px;width:2812px;height:2px;background:#b5b5b5"></div>
<div class="a" style="left:515.5px;top:1210.0px;width:70px;height:70px;border-radius:50%;background:#dcdcdc"></div>
<div class="t" style="top:1230.68px;font-size:28.7px;line-height:28.7px;color:#9b9b9b;font-weight:400;left:500.5px;width:100px;text-align:center;letter-spacing:-0.5px;">PA</div>
<div class="t" style="top:1228.50px;font-size:32px;line-height:32px;color:#3e4556;font-weight:400;left:650.5px;">Pascale</div>
<div class="t" style="top:1210.50px;font-size:32px;line-height:32px;color:#3e4556;font-weight:400;left:890px;">Allaire</div>
<div class="t" style="top:1246.50px;font-size:32px;line-height:32px;color:#3e4556;font-weight:400;left:890px;">Bourgin</div>
<div class="t" style="top:1210.50px;font-size:32px;line-height:32px;color:#3e4556;font-weight:400;left:1606.6px;width:400px;text-align:center;transform:scaleX(0.9500);transform-origin:center top;">Hervé</div>
<div class="t" style="top:1246.50px;font-size:32px;line-height:32px;color:#3e4556;font-weight:400;left:1606.6px;width:400px;text-align:center;transform:scaleX(0.9500);transform-origin:center top;">TAMARD</div>
<div class="t" style="top:1210.50px;font-size:32px;line-height:32px;color:#3b9ad9;font-weight:400;left:1848.6999999999998px;width:400px;text-align:center;transform:scaleX(0.9750);transform-origin:center top;">06 09 18</div>
<div class="t" style="top:1246.50px;font-size:32px;line-height:32px;color:#3b9ad9;font-weight:400;left:1848.6999999999998px;width:400px;text-align:center;transform:scaleX(0.9750);transform-origin:center top;">58 84</div>
<div class="t" style="top:1228.50px;font-size:32px;line-height:32px;color:#3b9ad9;font-weight:400;left:2062.0px;width:800px;text-align:center;">pabconsult@numericable.fr</div>
<div class="t" style="top:1210.50px;font-size:32px;line-height:32px;color:#3b9ad9;font-weight:400;left:2812.0px;width:500px;text-align:center;transform:scaleX(0.9860);transform-origin:center top;">18 rue du Mail</div>
<div class="t" style="top:1246.50px;font-size:32px;line-height:32px;color:#3b9ad9;font-weight:400;left:2812.0px;width:500px;text-align:center;transform:scaleX(0.9560);transform-origin:center top;">75002 PARIS</div>
<div class="a" style="left:484px;top:1312px;width:374px;height:128px;background:#fff"></div>
<div class="a" style="left:858px;top:1312px;width:252px;height:128px;background:#f7f7f7"></div>
<div class="a" style="left:1110px;top:1312px;width:288px;height:128px;background:#fff"></div>
<div class="a" style="left:1398px;top:1312px;width:278px;height:128px;background:#f7f7f7"></div>
<div class="a" style="left:1676px;top:1312px;width:484px;height:128px;background:#fff"></div>
<div class="a" style="left:2160px;top:1312px;width:604px;height:128px;background:#f7f7f7"></div>
<div class="a" style="left:2764px;top:1312px;width:532px;height:128px;background:#fff"></div>
<div class="a" style="left:484px;top:1440px;width:2812px;height:2px;background:#b5b5b5"></div>
<div class="a" style="left:515.5px;top:1340.0px;width:70px;height:70px;border-radius:50%;background:#dcdcdc"></div>
<div class="t" style="top:1360.68px;font-size:28.7px;line-height:28.7px;color:#9b9b9b;font-weight:400;left:500.5px;width:100px;text-align:center;letter-spacing:-0.5px;">PA</div>
<div class="t" style="top:1358.50px;font-size:32px;line-height:32px;color:#3e4556;font-weight:400;left:650.5px;">Pascale</div>
<div class="t" style="top:1340.50px;font-size:32px;line-height:32px;color:#3e4556;font-weight:400;left:890px;">Allaire</div>
<div class="t" style="top:1376.50px;font-size:32px;line-height:32px;color:#3e4556;font-weight:400;left:890px;">Bourgin</div>
<div class="t" style="top:1340.50px;font-size:32px;line-height:32px;color:#3e4556;font-weight:400;left:1606.6px;width:400px;text-align:center;transform:scaleX(0.9500);transform-origin:center top;">Hervé</div>
<div class="t" style="top:1376.50px;font-size:32px;line-height:32px;color:#3e4556;font-weight:400;left:1606.6px;width:400px;text-align:center;transform:scaleX(0.9500);transform-origin:center top;">TAMARD</div>
<div class="t" style="top:1340.50px;font-size:32px;line-height:32px;color:#3b9ad9;font-weight:400;left:1848.6999999999998px;width:400px;text-align:center;transform:scaleX(0.9750);transform-origin:center top;">06 09 18</div>
<div class="t" style="top:1376.50px;font-size:32px;line-height:32px;color:#3b9ad9;font-weight:400;left:1848.6999999999998px;width:400px;text-align:center;transform:scaleX(0.9750);transform-origin:center top;">58 84</div>
<div class="t" style="top:1358.50px;font-size:32px;line-height:32px;color:#3b9ad9;font-weight:400;left:2062.0px;width:800px;text-align:center;">pabconsult@numericable.fr</div>
<div class="t" style="top:1340.50px;font-size:32px;line-height:32px;color:#3b9ad9;font-weight:400;left:2812.0px;width:500px;text-align:center;transform:scaleX(0.9860);transform-origin:center top;">18 rue du Mail</div>
<div class="t" style="top:1376.50px;font-size:32px;line-height:32px;color:#3b9ad9;font-weight:400;left:2812.0px;width:500px;text-align:center;transform:scaleX(0.9560);transform-origin:center top;">75002 PARIS</div>
<div class="a" style="left:484px;top:1442px;width:374px;height:128px;background:#fff"></div>
<div class="a" style="left:858px;top:1442px;width:252px;height:128px;background:#f7f7f7"></div>
<div class="a" style="left:1110px;top:1442px;width:288px;height:128px;background:#fff"></div>
<div class="a" style="left:1398px;top:1442px;width:278px;height:128px;background:#f7f7f7"></div>
<div class="a" style="left:1676px;top:1442px;width:484px;height:128px;background:#fff"></div>
<div class="a" style="left:2160px;top:1442px;width:604px;height:128px;background:#f7f7f7"></div>
<div class="a" style="left:2764px;top:1442px;width:532px;height:128px;background:#fff"></div>
<div class="a" style="left:484px;top:1570px;width:2812px;height:2px;background:#b5b5b5"></div>
<div class="a" style="left:515.5px;top:1470.0px;width:70px;height:70px;border-radius:50%;background:#dcdcdc"></div>
<div class="t" style="top:1490.68px;font-size:28.7px;line-height:28.7px;color:#9b9b9b;font-weight:400;left:500.5px;width:100px;text-align:center;letter-spacing:-0.5px;">DA</div>
<div class="t" style="top:1488.50px;font-size:32px;line-height:32px;color:#3e4556;font-weight:400;left:650.5px;">David</div>
<div class="t" style="top:1488.50px;font-size:32px;line-height:32px;color:#3e4556;font-weight:400;left:890px;">Ambrosiano</div>
<div class="t" style="top:1488.50px;font-size:32px;line-height:32px;color:#3e4556;font-weight:400;left:1430px;">Caudalux</div>
<div class="t" style="top:1470.50px;font-size:32px;line-height:32px;color:#3e4556;font-weight:400;left:1606.6px;width:400px;text-align:center;transform:scaleX(0.9500);transform-origin:center top;">Hervé</div>
<div class="t" style="top:1506.50px;font-size:32px;line-height:32px;color:#3e4556;font-weight:400;left:1606.6px;width:400px;text-align:center;transform:scaleX(0.9500);transform-origin:center top;">TAMARD</div>
<div class="t" style="top:1470.50px;font-size:32px;line-height:32px;color:#3b9ad9;font-weight:400;left:1848.6999999999998px;width:400px;text-align:center;transform:scaleX(0.9750);transform-origin:center top;">02 56 34</div>
<div class="t" style="top:1506.50px;font-size:32px;line-height:32px;color:#3b9ad9;font-weight:400;left:1848.6999999999998px;width:400px;text-align:center;transform:scaleX(0.9750);transform-origin:center top;">54 32</div>
<div class="t" style="top:1488.50px;font-size:32px;line-height:32px;color:#3b9ad9;font-weight:400;left:2062.0px;width:800px;text-align:center;">david.ambrosiano.csn@notaires.fr</div>
<div class="t" style="top:1470.50px;font-size:32px;line-height:32px;color:#3b9ad9;font-weight:400;left:2812.0px;width:500px;text-align:center;transform:scaleX(0.9380);transform-origin:center top;">10, Rue de la Gare</div>
<div class="t" style="top:1506.50px;font-size:32px;line-height:32px;color:#3b9ad9;font-weight:400;left:2812.0px;width:500px;text-align:center;transform:scaleX(0.9810);transform-origin:center top;">45000 Orléans</div>
<div class="a" style="left:484px;top:1572px;width:374px;height:128px;background:#fff"></div>
<div class="a" style="left:858px;top:1572px;width:252px;height:128px;background:#f7f7f7"></div>
<div class="a" style="left:1110px;top:1572px;width:288px;height:128px;background:#fff"></div>
<div class="a" style="left:1398px;top:1572px;width:278px;height:128px;background:#f7f7f7"></div>
<div class="a" style="left:1676px;top:1572px;width:484px;height:128px;background:#fff"></div>
<div class="a" style="left:2160px;top:1572px;width:604px;height:128px;background:#f7f7f7"></div>
<div class="a" style="left:2764px;top:1572px;width:532px;height:128px;background:#fff"></div>
<div class="a" style="left:484px;top:1700px;width:2812px;height:2px;background:#b5b5b5"></div>
<div class="a" style="left:515.5px;top:1600.0px;width:70px;height:70px;border-radius:50%;background:#dcdcdc"></div>
<div class="t" style="top:1620.68px;font-size:28.7px;line-height:28.7px;color:#9b9b9b;font-weight:400;left:500.5px;width:100px;text-align:center;letter-spacing:-0.5px;">BA</div>
<div class="t" style="top:1618.50px;font-size:32px;line-height:32px;color:#3e4556;font-weight:400;left:650.5px;">Blandine</div>
<div class="t" style="top:1618.50px;font-size:32px;line-height:32px;color:#3e4556;font-weight:400;left:890px;">Amie Jo</div>
<div class="t" style="top:1600.50px;font-size:32px;line-height:32px;color:#3e4556;font-weight:400;left:1606.6px;width:400px;text-align:center;transform:scaleX(0.9500);transform-origin:center top;">Hervé</div>
<div class="t" style="top:1636.50px;font-size:32px;line-height:32px;color:#3e4556;font-weight:400;left:1606.6px;width:400px;text-align:center;transform:scaleX(0.9500);transform-origin:center top;">TAMARD</div>
<div class="t" style="top:1600.50px;font-size:32px;line-height:32px;color:#3b9ad9;font-weight:400;left:1848.6999999999998px;width:400px;text-align:center;transform:scaleX(0.9750);transform-origin:center top;">06 48 25</div>
<div class="t" style="top:1636.50px;font-size:32px;line-height:32px;color:#3b9ad9;font-weight:400;left:1848.6999999999998px;width:400px;text-align:center;transform:scaleX(0.9750);transform-origin:center top;">82 44</div>
<div class="a" style="left:484px;top:1702px;width:374px;height:128px;background:#fff"></div>
<div class="a" style="left:858px;top:1702px;width:252px;height:128px;background:#f7f7f7"></div>
<div class="a" style="left:1110px;top:1702px;width:288px;height:128px;background:#fff"></div>
<div class="a" style="left:1398px;top:1702px;width:278px;height:128px;background:#f7f7f7"></div>
<div class="a" style="left:1676px;top:1702px;width:484px;height:128px;background:#fff"></div>
<div class="a" style="left:2160px;top:1702px;width:604px;height:128px;background:#f7f7f7"></div>
<div class="a" style="left:2764px;top:1702px;width:532px;height:128px;background:#fff"></div>
<div class="a" style="left:484px;top:1830px;width:2812px;height:2px;background:#b5b5b5"></div>
<div class="a" style="left:515.5px;top:1730.0px;width:70px;height:70px;border-radius:50%;background:#dcdcdc"></div>
<div class="t" style="top:1750.68px;font-size:28.7px;line-height:28.7px;color:#9b9b9b;font-weight:400;left:500.5px;width:100px;text-align:center;letter-spacing:-0.5px;">CA</div>
<div class="t" style="top:1748.50px;font-size:32px;line-height:32px;color:#3e4556;font-weight:400;left:650.5px;">Celeste</div>
<div class="t" style="top:1748.50px;font-size:32px;line-height:32px;color:#3e4556;font-weight:400;left:890px;">Amie Jo</div>
<div class="t" style="top:1748.50px;font-size:32px;line-height:32px;color:#3e4556;font-weight:400;left:1430px;">Caudalux</div>
<div class="t" style="top:1730.50px;font-size:32px;line-height:32px;color:#3e4556;font-weight:400;left:1606.6px;width:400px;text-align:center;transform:scaleX(0.9500);transform-origin:center top;">Hervé</div>
<div class="t" style="top:1766.50px;font-size:32px;line-height:32px;color:#3e4556;font-weight:400;left:1606.6px;width:400px;text-align:center;transform:scaleX(0.9500);transform-origin:center top;">TAMARD</div>
<div class="t" style="top:1730.50px;font-size:32px;line-height:32px;color:#3b9ad9;font-weight:400;left:1848.6999999999998px;width:400px;text-align:center;transform:scaleX(0.9750);transform-origin:center top;">02 56 34</div>
<div class="t" style="top:1766.50px;font-size:32px;line-height:32px;color:#3b9ad9;font-weight:400;left:1848.6999999999998px;width:400px;text-align:center;transform:scaleX(0.9750);transform-origin:center top;">54 32</div>
<div class="t" style="top:1748.50px;font-size:32px;line-height:32px;color:#d8b87c;font-weight:400;left:2062.0px;width:800px;text-align:center;">celeste.amie-jo@caudalux.fr<svg style="position:relative;display:inline-block;vertical-align:-2px;margin-left:19px" width="28" height="28" viewBox="0 0 28 28"><circle cx="14" cy="14" r="14" fill="#d8b87c"/><circle cx="16.3" cy="6.6" r="1.7" fill="#fff"/><path d="M10.6 13.3Q12.6 11.9 14 11.9L11.6 20.4Q11.3 21.6 12.4 21.1L15.6 19" fill="none" stroke="#fff" stroke-width="1.7" stroke-linecap="round" stroke-linejoin="round"/></svg></div>
<div class="t" style="top:1730.50px;font-size:32px;line-height:32px;color:#3b9ad9;font-weight:400;left:2812.0px;width:500px;text-align:center;transform:scaleX(0.9380);transform-origin:center top;">10, Rue de la Gare</div>
<div class="t" style="top:1766.50px;font-size:32px;line-height:32px;color:#3b9ad9;font-weight:400;left:2812.0px;width:500px;text-align:center;transform:scaleX(0.9810);transform-origin:center top;">45000 Orléans</div>
<div class="a" style="left:484px;top:1832px;width:374px;height:128px;background:#fff"></div>
<div class="a" style="left:858px;top:1832px;width:252px;height:128px;background:#f7f7f7"></div>
<div class="a" style="left:1110px;top:1832px;width:288px;height:128px;background:#fff"></div>
<div class="a" style="left:1398px;top:1832px;width:278px;height:128px;background:#f7f7f7"></div>
<div class="a" style="left:1676px;top:1832px;width:484px;height:128px;background:#fff"></div>
<div class="a" style="left:2160px;top:1832px;width:604px;height:128px;background:#f7f7f7"></div>
<div class="a" style="left:2764px;top:1832px;width:532px;height:128px;background:#fff"></div>
<div class="a" style="left:484px;top:1960px;width:2812px;height:2px;background:#b5b5b5"></div>
<div class="a" style="left:484px;top:1760px;width:2812px;height:78px;background:linear-gradient(rgba(0,0,0,0),rgba(0,0,0,0.03))"></div>
<div class="a" style="left:0;top:0;width:2px;height:1838px;background:rgba(255,255,255,0.2)"></div>
</body></html>
